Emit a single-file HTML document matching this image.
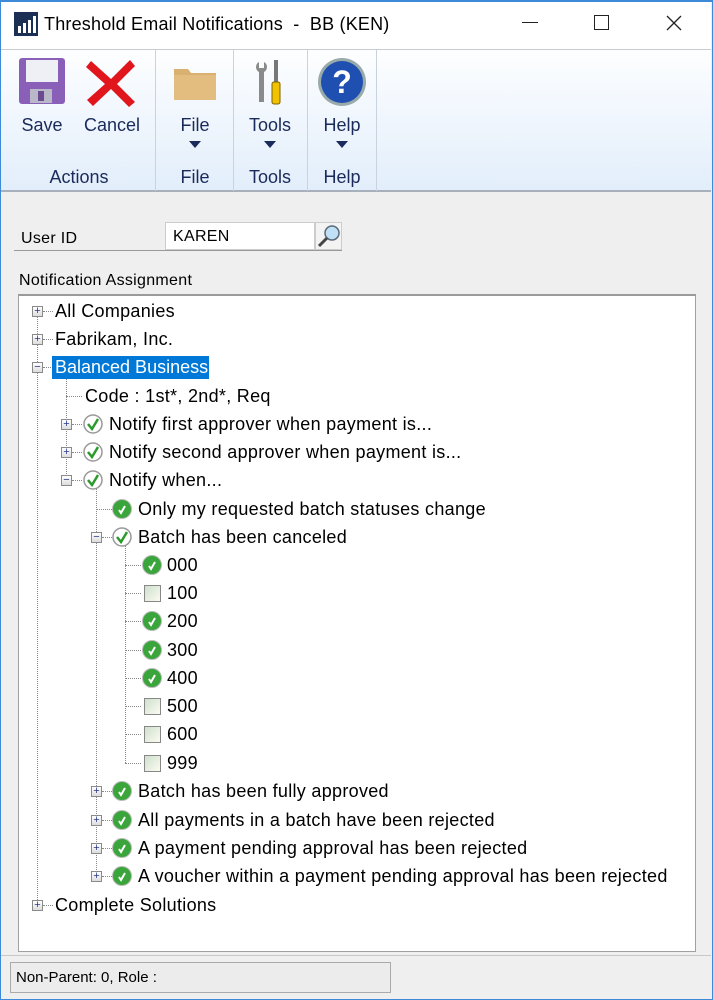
<!DOCTYPE html>
<html><head><meta charset="utf-8"><style>
*{margin:0;padding:0;box-sizing:border-box}
body{width:713px;height:1000px;background:#efefef;font-family:"Liberation Sans",sans-serif;position:relative;overflow:hidden;color:#000}
.a{position:absolute}
.t{position:absolute;font-size:18px;line-height:20px;white-space:nowrap;letter-spacing:0.3px}
.exp{position:absolute;width:11px;height:11px;border:1px solid #8a8a8a;background:linear-gradient(#fff,#dcdcdc);font-size:11px;line-height:9px;text-align:center;color:#2a3a8a}
.vl{position:absolute;border-left:1px dotted #888;width:0}
.hl{position:absolute;border-top:1px dotted #888;height:0}
.ic{position:absolute;width:20px;height:20px}
.rl{position:absolute;font-size:18px;color:#1a2a5a;text-align:center}
</style></head><body>
<div class="a" style="left:0;top:0;width:713px;height:1000px;border:1px solid #3c8ad8;border-top:2px solid #3c8ad8"></div>
<div class="a" style="left:1px;top:2px;width:710px;height:47px;background:#fff"></div>
<svg class="a" style="left:14px;top:12px" width="24" height="24"><rect width="24" height="24" fill="#1c2f55"/><rect x="4" y="14" width="3" height="7" fill="#fff"/><rect x="9" y="11" width="3" height="10" fill="#fff"/><rect x="14" y="8" width="3" height="13" fill="#fff"/><rect x="19" y="4" width="3" height="17" fill="#fff"/></svg>
<div class="t" style="left:44px;top:14px;font-size:18px;letter-spacing:0.2px">Threshold Email Notifications&nbsp; - &nbsp;BB (KEN)</div>
<div class="a" style="left:522px;top:22px;width:16px;height:1px;background:#222"></div>
<div class="a" style="left:594px;top:15px;width:15px;height:15px;border:1px solid #222"></div>
<svg class="a" style="left:666px;top:15px" width="16" height="16"><path d="M1 1L15 15M15 1L1 15" stroke="#222" stroke-width="1.3"/></svg>
<div class="a" style="left:1px;top:49px;width:710px;height:143px;background:linear-gradient(#fdfeff,#e2eefb);border-top:1px solid #c8ccd2;border-bottom:2px solid #a8b0bb"></div>
<div class="a" style="left:155px;top:50px;width:1px;height:141px;background:#c9d3de"></div>
<div class="a" style="left:233px;top:50px;width:1px;height:141px;background:#c9d3de"></div>
<div class="a" style="left:307px;top:50px;width:1px;height:141px;background:#c9d3de"></div>
<div class="a" style="left:376px;top:50px;width:1px;height:141px;background:#c9d3de"></div>
<svg class="a" style="left:18px;top:57px" width="48" height="48"><rect x="1" y="1" width="46" height="46" rx="3" fill="#8a5fb8"/><rect x="8" y="3" width="32" height="22" fill="#eef0f5"/><rect x="12" y="32" width="22" height="14" fill="#b8b8c8"/><rect x="20" y="34" width="6" height="10" fill="#6a4a90"/></svg>
<svg class="a" style="left:85px;top:57px" width="52" height="50"><path d="M6 4L26 22L45 3L50 9L32 27L50 45L44 50L26 32L8 49L2 43L20 27L1 10Z" fill="#e0161c"/></svg>
<div class="rl" style="left:14px;top:115px;width:56px">Save</div>
<div class="rl" style="left:80px;top:115px;width:64px">Cancel</div>
<div class="rl" style="left:20px;top:167px;width:118px">Actions</div>
<svg class="a" style="left:173px;top:63px" width="44" height="38"><path d="M1 6h14l3 4h25v27H1z" fill="#d9b070"/><rect x="1" y="12" width="42" height="25" fill="#e3bd80"/></svg>
<div class="rl" style="left:165px;top:115px;width:60px">File</div>
<svg class="a" style="left:189px;top:141px" width="12" height="7"><path d="M0 0h12L6 7z" fill="#1a2a5a"/></svg>
<div class="rl" style="left:165px;top:167px;width:60px">File</div>
<svg class="a" style="left:253px;top:58px" width="32" height="48"><path d="M6 4c-4 2-4 8 0 10v30h5V14c4-2 4-8 0-10v6H6z" fill="#8a8a8a"/><rect x="21" y="2" width="4" height="22" fill="#777"/><rect x="19" y="24" width="8" height="22" rx="2" fill="#f2c200" stroke="#7a6200"/></svg>
<div class="rl" style="left:240px;top:115px;width:60px">Tools</div>
<svg class="a" style="left:264px;top:141px" width="12" height="7"><path d="M0 0h12L6 7z" fill="#1a2a5a"/></svg>
<div class="rl" style="left:240px;top:167px;width:60px">Tools</div>
<svg class="a" style="left:317px;top:57px" width="50" height="50"><circle cx="25" cy="25" r="24" fill="#9aa"/><circle cx="25" cy="25" r="21" fill="#1f4fb0"/><text x="25" y="36" font-family="Liberation Sans" font-weight="bold" font-size="32" fill="#fff" text-anchor="middle">?</text></svg>
<div class="rl" style="left:312px;top:115px;width:60px">Help</div>
<svg class="a" style="left:336px;top:141px" width="12" height="7"><path d="M0 0h12L6 7z" fill="#1a2a5a"/></svg>
<div class="rl" style="left:312px;top:167px;width:60px">Help</div>
<div class="t" style="left:21px;top:229px;font-size:16px">User ID</div>
<div class="a" style="left:14px;top:250px;width:328px;height:1px;background:#999"></div>
<div class="a" style="left:165px;top:222px;width:150px;height:28px;background:#fff;border:1px solid #ccc"></div>
<div class="t" style="left:173px;top:227px;font-size:16px">KAREN</div>
<div class="a" style="left:315px;top:222px;width:27px;height:28px;background:#f3f3f3;border:1px solid #ccc"></div>
<svg class="a" style="left:316px;top:223px" width="26" height="26"><circle cx="16" cy="10" r="7" fill="#bfe0f5" stroke="#5a6a7a" stroke-width="1.5"/><path d="M11 15L3 23" stroke="#444" stroke-width="3"/></svg>
<div class="t" style="left:19px;top:271px;font-size:16px">Notification Assignment</div>
<div class="a" style="left:18px;top:294px;width:678px;height:658px;background:#fff;border:1px solid #a0a0a0;border-top:2px solid #9a9a9a"></div>
<div class="vl" style="left:37px;top:316px;height:590px"></div>
<div class="vl" style="left:66px;top:374px;height:106px"></div>
<div class="vl" style="left:96px;top:488px;height:388px"></div>
<div class="vl" style="left:125px;top:545px;height:218px"></div>
<div class="hl" style="left:43px;top:311px;width:10px"></div>
<div class="hl" style="left:43px;top:339px;width:10px"></div>
<div class="hl" style="left:43px;top:367px;width:10px"></div>
<div class="hl" style="left:43px;top:905px;width:10px"></div>
<div class="hl" style="left:66px;top:396px;width:16px"></div>
<div class="hl" style="left:72px;top:424px;width:10px"></div>
<div class="hl" style="left:72px;top:452px;width:10px"></div>
<div class="hl" style="left:72px;top:480px;width:10px"></div>
<div class="hl" style="left:96px;top:509px;width:16px"></div>
<div class="hl" style="left:102px;top:537px;width:10px"></div>
<div class="hl" style="left:102px;top:791px;width:10px"></div>
<div class="hl" style="left:102px;top:820px;width:10px"></div>
<div class="hl" style="left:102px;top:848px;width:10px"></div>
<div class="hl" style="left:102px;top:876px;width:10px"></div>
<div class="hl" style="left:125px;top:565px;width:16px"></div>
<div class="hl" style="left:125px;top:593px;width:16px"></div>
<div class="hl" style="left:125px;top:621px;width:16px"></div>
<div class="hl" style="left:125px;top:650px;width:16px"></div>
<div class="hl" style="left:125px;top:678px;width:16px"></div>
<div class="hl" style="left:125px;top:706px;width:16px"></div>
<div class="hl" style="left:125px;top:734px;width:16px"></div>
<div class="hl" style="left:125px;top:763px;width:16px"></div>
<div class="exp" style="left:32px;top:306px">+</div>
<div class="exp" style="left:32px;top:334px">+</div>
<div class="exp" style="left:32px;top:362px">−</div>
<div class="exp" style="left:61px;top:419px">+</div>
<div class="exp" style="left:61px;top:447px">+</div>
<div class="exp" style="left:61px;top:475px">−</div>
<div class="exp" style="left:91px;top:532px">−</div>
<div class="exp" style="left:91px;top:786px">+</div>
<div class="exp" style="left:91px;top:815px">+</div>
<div class="exp" style="left:91px;top:843px">+</div>
<div class="exp" style="left:91px;top:871px">+</div>
<div class="exp" style="left:32px;top:900px">+</div>
<div class="t" style="left:55px;top:301px">All Companies</div>
<div class="t" style="left:55px;top:329px">Fabrikam, Inc.</div>
<div class="a" style="left:52px;top:356px;width:157px;height:23px;background:#0078d7"></div>
<div class="t" style="left:55px;top:357px;color:#fff;letter-spacing:0">Balanced Business</div>
<div class="t" style="left:85px;top:386px">Code : 1st*, 2nd*, Req</div>
<svg class="ic" style="left:83px;top:414px"><circle cx="10" cy="10" r="9" fill="#fff" stroke="#999" stroke-width="1.5"/><path d="M5 10l4 5 6-10" stroke="#2a9a2a" stroke-width="2.5" fill="none"/></svg>
<svg class="ic" style="left:83px;top:442px"><circle cx="10" cy="10" r="9" fill="#fff" stroke="#999" stroke-width="1.5"/><path d="M5 10l4 5 6-10" stroke="#2a9a2a" stroke-width="2.5" fill="none"/></svg>
<svg class="ic" style="left:83px;top:470px"><circle cx="10" cy="10" r="9" fill="#fff" stroke="#999" stroke-width="1.5"/><path d="M5 10l4 5 6-10" stroke="#2a9a2a" stroke-width="2.5" fill="none"/></svg>
<svg class="ic" style="left:112px;top:527px"><circle cx="10" cy="10" r="9" fill="#fff" stroke="#999" stroke-width="1.5"/><path d="M5 10l4 5 6-10" stroke="#2a9a2a" stroke-width="2.5" fill="none"/></svg>
<div class="t" style="left:109px;top:414px">Notify first approver when payment is...</div>
<div class="t" style="left:109px;top:442px">Notify second approver when payment is...</div>
<div class="t" style="left:109px;top:470px">Notify when...</div>
<svg class="ic" style="left:112px;top:499px"><circle cx="10" cy="10" r="9.5" fill="#3aa53a" stroke="#bbb" stroke-width="1"/><path d="M7 11l2 3 4-7" stroke="#fff" stroke-width="2" fill="none"/></svg>
<svg class="ic" style="left:112px;top:781px"><circle cx="10" cy="10" r="9.5" fill="#3aa53a" stroke="#bbb" stroke-width="1"/><path d="M7 11l2 3 4-7" stroke="#fff" stroke-width="2" fill="none"/></svg>
<svg class="ic" style="left:112px;top:810px"><circle cx="10" cy="10" r="9.5" fill="#3aa53a" stroke="#bbb" stroke-width="1"/><path d="M7 11l2 3 4-7" stroke="#fff" stroke-width="2" fill="none"/></svg>
<svg class="ic" style="left:112px;top:838px"><circle cx="10" cy="10" r="9.5" fill="#3aa53a" stroke="#bbb" stroke-width="1"/><path d="M7 11l2 3 4-7" stroke="#fff" stroke-width="2" fill="none"/></svg>
<svg class="ic" style="left:112px;top:866px"><circle cx="10" cy="10" r="9.5" fill="#3aa53a" stroke="#bbb" stroke-width="1"/><path d="M7 11l2 3 4-7" stroke="#fff" stroke-width="2" fill="none"/></svg>
<div class="t" style="left:138px;top:499px">Only my requested batch statuses change</div>
<div class="t" style="left:138px;top:527px">Batch has been canceled</div>
<div class="t" style="left:138px;top:781px">Batch has been fully approved</div>
<div class="t" style="left:138px;top:810px">All payments in a batch have been rejected</div>
<div class="t" style="left:138px;top:838px">A payment pending approval has been rejected</div>
<div class="t" style="left:138px;top:866px">A voucher within a payment pending approval has been rejected</div>
<svg class="ic" style="left:142px;top:555px"><circle cx="10" cy="10" r="9.5" fill="#3aa53a" stroke="#bbb" stroke-width="1"/><path d="M7 11l2 3 4-7" stroke="#fff" stroke-width="2" fill="none"/></svg>
<svg class="ic" style="left:142px;top:611px"><circle cx="10" cy="10" r="9.5" fill="#3aa53a" stroke="#bbb" stroke-width="1"/><path d="M7 11l2 3 4-7" stroke="#fff" stroke-width="2" fill="none"/></svg>
<svg class="ic" style="left:142px;top:640px"><circle cx="10" cy="10" r="9.5" fill="#3aa53a" stroke="#bbb" stroke-width="1"/><path d="M7 11l2 3 4-7" stroke="#fff" stroke-width="2" fill="none"/></svg>
<svg class="ic" style="left:142px;top:668px"><circle cx="10" cy="10" r="9.5" fill="#3aa53a" stroke="#bbb" stroke-width="1"/><path d="M7 11l2 3 4-7" stroke="#fff" stroke-width="2" fill="none"/></svg>
<div class="a" style="left:144px;top:585px;width:17px;height:17px;border:1px solid #888;background:linear-gradient(135deg,#cfe0cf,#fbfbf0)"></div>
<div class="a" style="left:144px;top:698px;width:17px;height:17px;border:1px solid #888;background:linear-gradient(135deg,#cfe0cf,#fbfbf0)"></div>
<div class="a" style="left:144px;top:726px;width:17px;height:17px;border:1px solid #888;background:linear-gradient(135deg,#cfe0cf,#fbfbf0)"></div>
<div class="a" style="left:144px;top:755px;width:17px;height:17px;border:1px solid #888;background:linear-gradient(135deg,#cfe0cf,#fbfbf0)"></div>
<div class="t" style="left:167px;top:555px">000</div>
<div class="t" style="left:167px;top:583px">100</div>
<div class="t" style="left:167px;top:611px">200</div>
<div class="t" style="left:167px;top:640px">300</div>
<div class="t" style="left:167px;top:668px">400</div>
<div class="t" style="left:167px;top:696px">500</div>
<div class="t" style="left:167px;top:724px">600</div>
<div class="t" style="left:167px;top:753px">999</div>
<div class="t" style="left:55px;top:895px">Complete Solutions</div>
<div class="a" style="left:1px;top:955px;width:710px;height:1px;background:#c8c8c8"></div>
<div class="a" style="left:10px;top:962px;width:381px;height:31px;border:1px solid #aaa;background:#ececec"></div>
<div class="t" style="left:16px;top:968px;font-size:15px;letter-spacing:0">Non-Parent: 0, Role :</div>
</body></html>
